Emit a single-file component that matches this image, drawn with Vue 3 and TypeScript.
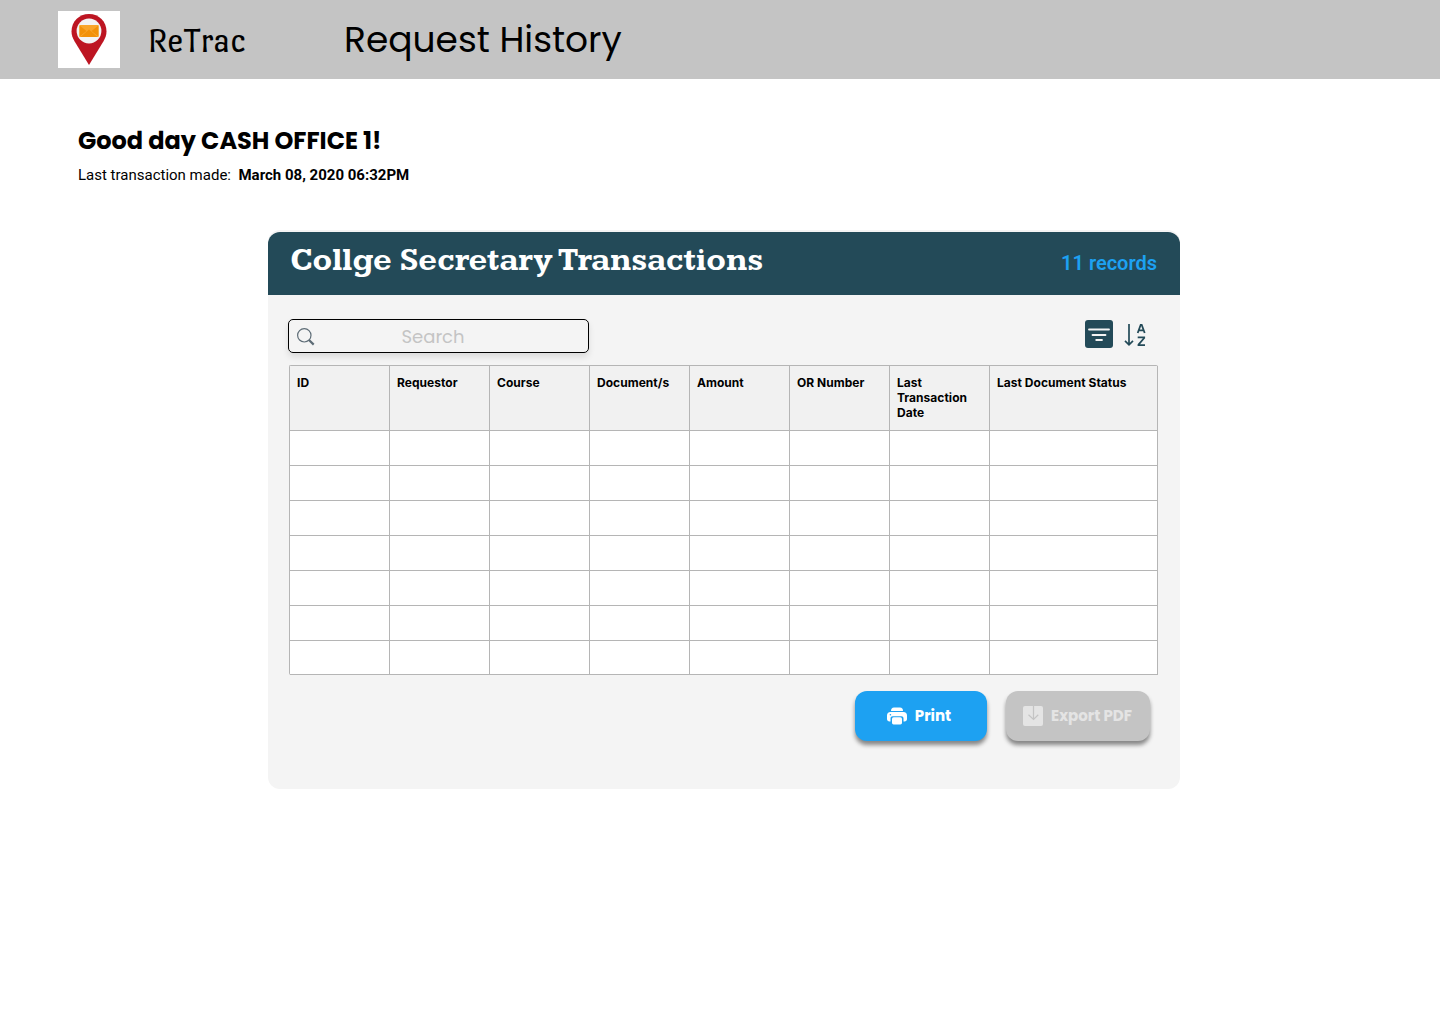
<script setup lang="ts">
interface Column {
  label: string
}

const columns: Column[] = [
  { label: 'ID' },
  { label: 'Requestor' },
  { label: 'Course' },
  { label: 'Document/s' },
  { label: 'Amount' },
  { label: 'OR Number' },
  { label: 'Last Transaction Date' },
  { label: 'Last Document Status' },
]
const emptyRows = 7
</script>

<template>
  <div class="page">
    <header class="topbar">
      <div class="logo">
        <svg width="62" height="57" viewBox="0 0 62 57">
          <path d="M31 3C21 3 13.500 10.600 13.500 20.500C13.500 24 14.600 27 16.500 30.200L31 54L45.500 30.200C47.400 27 48.500 24 48.500 20.500C48.500 10.600 41 3 31 3Z" fill="#bd1522" />
          <circle cx="31" cy="20" r="12.400" fill="#f3f3f3" />
          <rect x="21.500" y="14" width="19" height="12" fill="#f9a52b" />
          <path d="M21.500 14.500V25.500L28.500 20ZM40.500 14.500V25.500L33.500 20ZM22.500 26L31 18.500L39.500 26Z" fill="#f29109" />
        </svg>
      </div>
      <span class="brand">ReTrac</span>
      <h1 class="title">Request History</h1>
    </header>

    <section class="welcome">
      <h2 class="greeting">Good day CASH OFFICE 1!</h2>
      <p class="last"><span class="last-label">Last transaction made:</span><b>March 08, 2020 06:32PM</b></p>
    </section>

    <main class="card">
      <div class="card-head">
        <h3 class="card-title">Collge Secretary Transactions</h3>
        <span class="records">11 records</span>
      </div>
      <div class="card-body">
        <div class="tools">
          <label class="search">
            <svg width="18" height="18" viewBox="0 0 18 18" fill="none" stroke="#5d6c76">
              <circle cx="7.300" cy="7.300" r="6.700" stroke-width="1.200" />
              <path d="M12 12L16.700 16.600" stroke-width="2.200" />
            </svg>
            <span class="placeholder">Search</span>
          </label>
          <div class="actions">
            <svg width="28" height="28" viewBox="0 0 28 28">
              <rect width="28" height="28" rx="3" fill="#234a58" />
              <path d="M4 9.500H24M7.500 15H20.500M11.200 20H17" stroke="#f4f4f4" stroke-width="1.800" stroke-linecap="round" />
            </svg>
            <svg width="24" height="28" viewBox="0 0 24 28" fill="none" stroke="#234a58">
              <path d="M5 4V24.500M1 20.800L5 24.800L9 20.800" stroke-width="1.700" />
              <path d="M13.700 13L16.700 4.800H17.700L20.700 13M14.800 10.400H19.600" stroke-width="1.800" />
              <path d="M13.700 17.400H20.200V18L14.500 24.600V25.200H21" stroke-width="1.800" />
            </svg>
          </div>
        </div>

        <div class="table">
          <div v-for="col in columns" :key="col.label" class="cell head">{{ col.label }}</div>
          <template v-for="row in emptyRows" :key="row">
            <div v-for="col in columns" :key="col.label" class="cell"></div>
          </template>
        </div>

        <div class="buttons">
          <button class="btn print" type="button">
            <svg width="20" height="18" viewBox="0 0 20 18" fill="#fff">
              <path d="M4 4C4 1.800 5 .6 7 .6H13C15 .6 16 1.800 16 4Z" />
              <path d="M3.500 5H16.500C18.700 5 20 6.500 20 8.500V12C20 13.600 19 14.500 17.500 14.500H16.500V11.500C16.500 10 15.600 9.200 14.300 9.200H5.700C4.400 9.200 3.500 10 3.500 11.500V14.500H2.500C1 14.500 0 13.600 0 12V8.500C0 6.500 1.300 5 3.500 5Z" />
              <rect x="5" y="10.300" width="10" height="7.100" rx="1.600" />
              <circle cx="3.400" cy="7.700" r=".8" fill="#1da1f2" />
            </svg>
            <span>Print</span>
          </button>
          <button class="btn export" type="button">
            <svg width="20" height="20" viewBox="0 0 20 20">
              <rect width="20" height="20" rx="2" fill="#e4e4e4" />
              <path d="M10.500 0V13M5.500 8.800L10.500 13.500L15.300 8.800" fill="none" stroke="#c4c4c4" stroke-width="1.200" />
            </svg>
            <span>Export PDF</span>
          </button>
        </div>
      </div>
    </main>
  </div>
</template>

<style>
body {
  margin: 0;
  background: #fff;
}
</style>

<style scoped>
.page {
  width: 1440px;
  height: 1024px;
  overflow: hidden;
  box-sizing: border-box;
  color: #000;
}
h1, h2, h3, p {
  margin: 0;
}
svg {
  display: block;
  flex: none;
}
.topbar {
  display: flex;
  align-items: center;
  height: 79px;
  padding-left: 58px;
  box-sizing: border-box;
  background: #c4c4c4;
}
.logo {
  width: 62px;
  height: 57px;
  background: #fff;
}
.brand {
  width: 197px;
  margin-left: 27px;
  padding-top: 2px;
  font: 400 36px/40px "Port Lligat Sans", "Noto Sans", sans-serif;
}
.title {
  font: 400 36px/54px Poppins, Inter, sans-serif;
  white-space: nowrap;
}
.welcome {
  height: 151px;
  padding: 44px 0 0 78px;
  box-sizing: border-box;
}
.greeting {
  font: 700 24px/36px Poppins, Inter, sans-serif;
  white-space: nowrap;
}
.last {
  display: flex;
  gap: 7.500px;
  margin-top: 6px;
  font: 400 15px/20px Roboto, sans-serif;
  white-space: nowrap;
}
.card {
  width: 912px;
  height: 559px;
  margin-left: 268px;
  padding-top: 2px;
  box-sizing: border-box;
  border-radius: 12px;
  background: #f4f4f4;
}
.card-head {
  display: flex;
  align-items: center;
  justify-content: space-between;
  height: 63px;
  padding: 0 23px 0 22px;
  box-sizing: border-box;
  border-radius: 12px 12px 0 0;
  background: #234a58;
}
.card-title {
  padding-bottom: 6px;
  color: #fff;
  font: 700 32px/36px Kameron, "DejaVu Serif", serif;
  letter-spacing: -0.03px;
  white-space: nowrap;
}
.records {
  padding-bottom: 1px;
  color: #1da1f2;
  font: 600 20px/24px Roboto, sans-serif;
}
.card-body {
  padding: 24px 22px 0 20px;
}
.tools {
  display: flex;
  justify-content: space-between;
  height: 46px;
}
.search {
  display: grid;
  grid-template-columns: 18px 1fr;
  align-items: center;
  width: 301px;
  height: 34px;
  padding: 1px 0 0 8px;
  box-sizing: border-box;
  border: 1px solid #000;
  border-radius: 5px;
  box-shadow: 0 4px 6px rgba(0, 0, 0, 0.1);
}
.placeholder {
  padding-left: 86.500px;
  color: #c4c4c4;
  font: 400 18px/27px Poppins, Inter, sans-serif;
}
.actions {
  display: flex;
  gap: 11px;
  padding: 1px 10px 0 0;
}
.table {
  display: grid;
  grid-template-columns: repeat(7, 100px) 168px;
  grid-template-rows: 65px repeat(6, 35px) 34px;
  width: 869px;
  margin-left: 1px;
  box-sizing: border-box;
  border: solid #b5b5b5;
  border-width: 1px 0 0 1px;
  border-radius: 2px;
}
.cell {
  box-sizing: border-box;
  border: solid #b5b5b5;
  border-width: 0 1px 1px 0;
  background: #fff;
}
.head {
  padding: 9px 7px;
  background: #f1f1f1;
  font: 700 12px/15px Inter, sans-serif;
  letter-spacing: 0.03px;
}
.buttons {
  display: flex;
  justify-content: flex-end;
  gap: 19px;
  margin-top: 16px;
  padding-right: 8px;
}
.btn {
  display: flex;
  align-items: center;
  justify-content: center;
  gap: 8px;
  height: 50px;
  padding: 0 4px 0 0;
  box-sizing: border-box;
  border: 0;
  border-radius: 12px;
  box-shadow: 0 4px 4px rgba(0, 0, 0, 0.45);
  font: 700 15px/22px Poppins, Inter, sans-serif;
  white-space: nowrap;
}
.print {
  width: 132px;
  background: #1da1f2;
  color: #fff;
}
.export {
  width: 144px;
  padding-right: 1px;
  background: #c4c4c4;
  color: #e4e4e4;
}
</style>
